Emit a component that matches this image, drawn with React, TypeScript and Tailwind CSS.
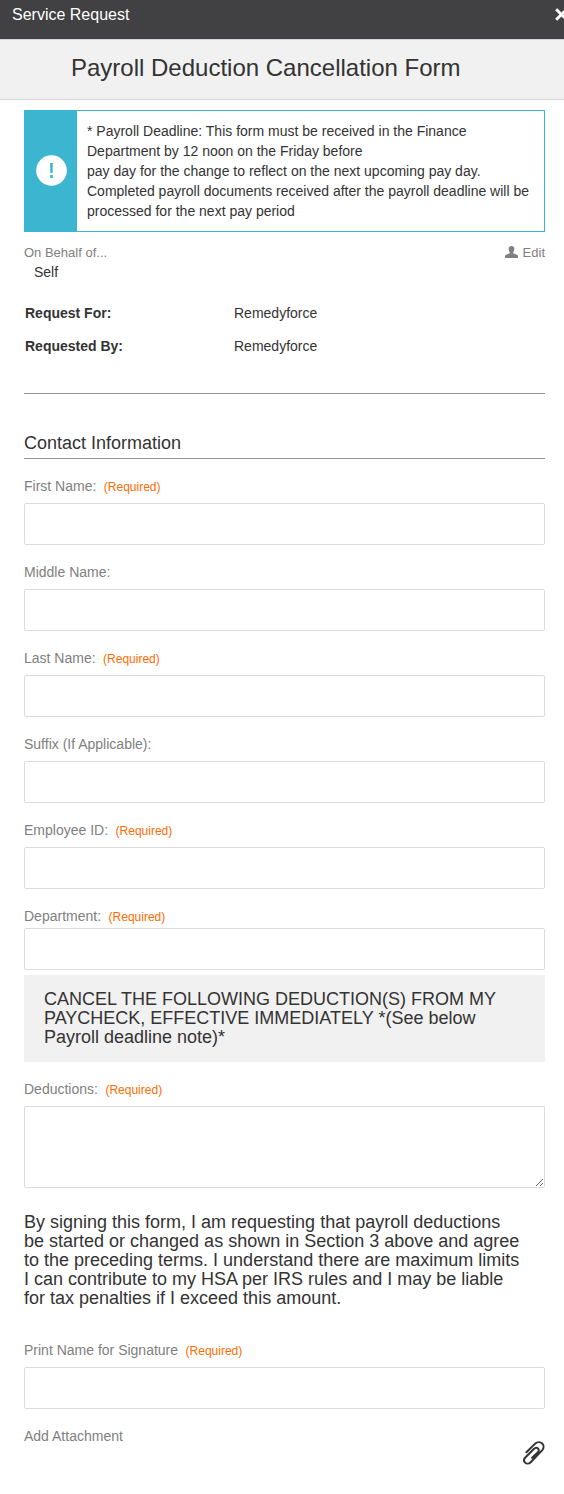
type FieldProps = { label: string; required?: boolean; tight?: boolean };

function Label({ label, required, id }: { label: string; required?: boolean; id: string }) {
  return (
    <label htmlFor={id} className="flex h-5 items-center whitespace-pre text-[14px] leading-5 text-[#808080]">
      <span>{label}</span>
      {required && <span className="ml-[7.5px] pt-px text-[12px] text-[#ff6c00]">(Required)</span>}
    </label>
  );
}

function Field({ label, required, tight }: FieldProps) {
  return (
    <div className={tight ? "flex flex-col gap-0.5" : "flex flex-col gap-[7px]"}>
      <Label label={label} required={required} id={label} />
      <input id={label} type="text" className="h-[42px] w-full rounded-[2px] border border-[#dcdcdc] bg-white px-3" />
    </div>
  );
}

function PersonIcon() {
  return (
    <svg width="13" height="12" viewBox="0 0 13 12" fill="#808080" aria-hidden="true">
      <path d="M6.5 0C4.700 0 3.700 1 3.700 2.700c0 1.700.4 2.700 1.100 3.500v1.100L1.100 8.700C.3 9 0 9.500 0 10.300V12h13v-1.700c0-.8-.3-1.300-1.100-1.600L8.200 7.300V6.200c.7-.8 1.100-1.800 1.100-3.500C9.300 1 8.300 0 6.500 0z" />
    </svg>
  );
}

function PaperclipIcon() {
  return (
    <svg width="22" height="24" viewBox="0 0 22 24" fill="none" stroke="#333" strokeWidth="2" strokeLinecap="round" strokeLinejoin="round" aria-hidden="true">
      <path d="M3.400 11.200 L12.200 2.600 C14.400 .8 17.400 .8 19.200 2.500 C21 4.300 21 7.200 19.300 9.100 L7.700 21.300 C6.100 22.900 3.500 23 2.100 21.600 C.8 20.300 .8 18.100 2.300 16.500 L10.800 8 C12.200 6.700 14 6.600 15.100 7.600 C16.200 8.700 16 10.200 14.700 11.400 L9.100 16.700" />
    </svg>
  );
}

export default function App() {
  return (
    <div className="min-h-[1494px] w-full overflow-hidden bg-white font-['Liberation_Sans',Arial,sans-serif] text-[14px] leading-5 text-[#333]">
      <header className="flex h-[39px] justify-between bg-[#414042] pl-3 text-white">
        <span className="pt-[5px] text-[16px] leading-5">Service Request</span>
        <button type="button" aria-label="Close" className="-mr-[4px] mt-[8px] h-[13px] w-[13px]">
          <svg width="13" height="13" viewBox="0 0 13 13" stroke="white" strokeWidth="3">
            <path d="M1.200 1.200 11.800 11.800M11.800 1.200 1.200 11.800" />
          </svg>
        </button>
      </header>
      <div className="h-[61px] border-y border-[#d6d6d6] bg-[#f1f1f1] pl-[71px] pt-[13px]">
        <h1 className="text-[24px] leading-[30px]">Payroll Deduction Cancellation Form</h1>
      </div>

      <main className="flex w-[545px] flex-col pl-6">
        <section className="mt-2.5 flex h-[122px] border border-[#3cb6d0]">
          <div className="flex w-[52px] shrink-0 items-start bg-[#3cb6d0] pl-[11px] pt-11">
            <svg width="31" height="31" viewBox="0 0 31 31" aria-hidden="true">
              <circle cx="15.500" cy="15.500" r="15.300" fill="white" />
              <path d="M14.100 8h2.700l-.2 10h-2.300zM14.100 20h2.700v3h-2.700z" fill="#3cb6d0" />
            </svg>
          </div>
          <p className="whitespace-nowrap pl-2.5 pt-2.5">
            * Payroll Deadline: This form must be received in the Finance
            <br />
            Department by 12 noon on the Friday before
            <br />
            pay day for the change to reflect on the next upcoming pay day.
            <br />
            Completed payroll documents received after the payroll deadline will be
            <br />
            processed for the next pay period
          </p>
        </section>

        <div className="mt-2.5 flex h-5 items-center justify-between text-[13px] text-[#808080]">
          <span className="pt-0.5">On Behalf of...</span>
          <button type="button" className="flex items-center gap-[5px]">
            <PersonIcon />
            <span className="pt-0.5">Edit</span>
          </button>
        </div>
        <div className="pl-2.5">Self</div>

        <dl className="mt-[21px] grid grid-cols-[209px_1fr] gap-y-[13px] pl-px">
          <dt className="font-bold">Request For:</dt>
          <dd>Remedyforce</dd>
          <dt className="font-bold">Requested By:</dt>
          <dd>Remedyforce</dd>
        </dl>

        <hr className="mt-[37px] border-t border-[#959595]" />
        <h2 className="mt-[37px] h-7 border-b border-[#959595] text-[18px] leading-6">Contact Information</h2>

        <div className="mt-[17px] flex flex-col gap-[17px]">
          <Field label="First Name:" required />
          <Field label="Middle Name:" />
          <Field label="Last Name:" required />
          <Field label="Suffix (If Applicable):" />
          <Field label="Employee ID:" required />
          <Field label="Department:" required tight />
        </div>

        <div className="mt-[5px] h-[87px] whitespace-nowrap bg-[#f1f1f1] pl-5 pt-[15px] text-[18px] leading-[19px]">
          CANCEL THE FOLLOWING DEDUCTION(S) FROM MY
          <br />
          PAYCHECK, EFFECTIVE IMMEDIATELY *(See below
          <br />
          Payroll deadline note)*
        </div>

        <div className="mt-[17px] flex flex-col gap-[7px]">
          <Label label="Deductions:" required id="deductions" />
          <textarea id="deductions" className="block h-[82px] w-full resize rounded-[2px] border border-[#dcdcdc] bg-white" />
        </div>

        <p className="mt-[25px] whitespace-nowrap text-[18px] leading-[19px]">
          By signing this form, I am requesting that payroll deductions
          <br />
          be started or changed as shown in Section 3 above and agree
          <br />
          to the preceding terms. I understand there are maximum limits
          <br />
          I can contribute to my HSA per IRS rules and I may be liable
          <br />
          for tax penalties if I exceed this amount.
        </p>

        <div className="mt-8">
          <Field label="Print Name for Signature" required />
        </div>
        <div className="mt-[17px] flex items-start justify-between text-[#808080]">
          <span>Add Attachment</span>
          <button type="button" aria-label="Attach a file" className="mt-[15px]">
            <PaperclipIcon />
          </button>
        </div>
      </main>
    </div>
  );
}
